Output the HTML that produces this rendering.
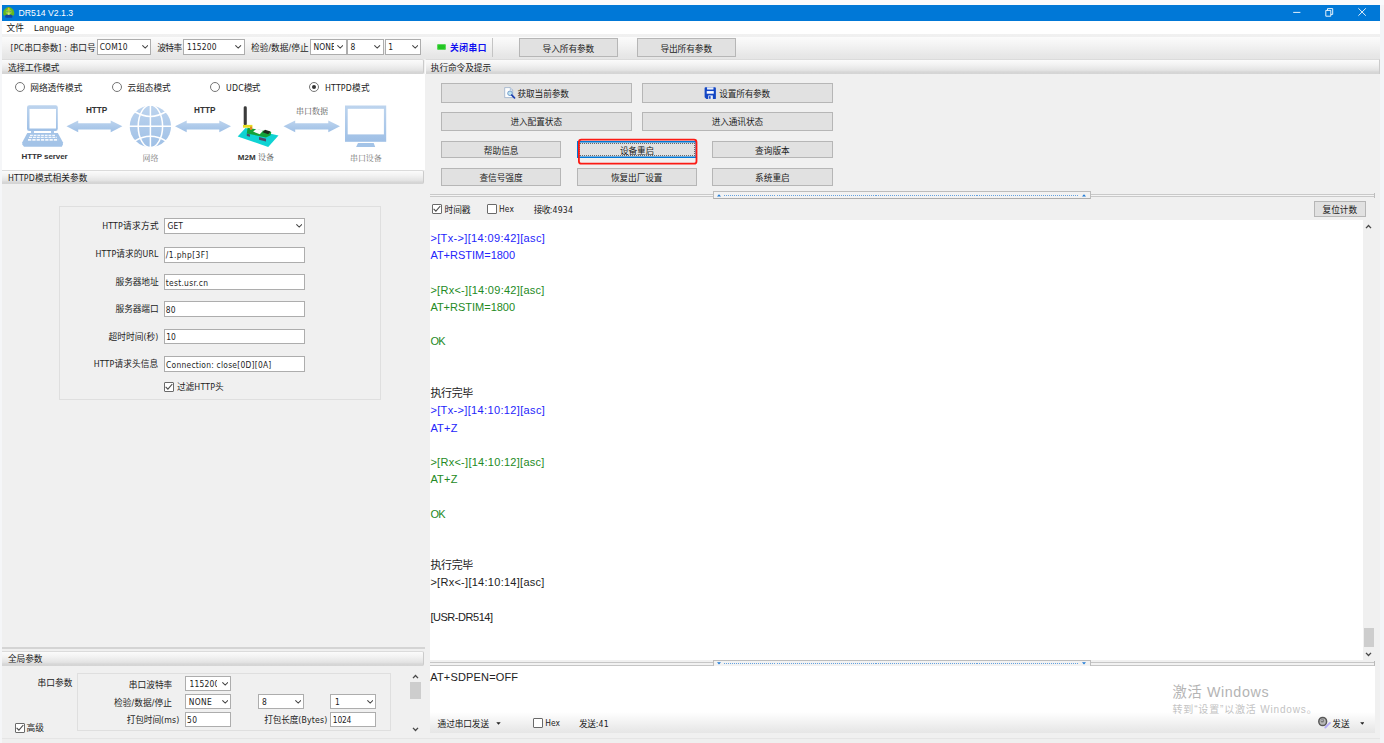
<!DOCTYPE html>
<html lang="zh-CN">
<head>
<meta charset="utf-8">
<title>DR514 V2.1.3</title>
<style>
*{box-sizing:border-box;margin:0;padding:0}
html,body{width:1384px;height:743px;overflow:hidden}
body{position:relative;background:#f9fafc;font-family:"DejaVu Sans Condensed","Liberation Sans","Noto Sans CJK SC",sans-serif;font-size:8.7px;color:#1c1c1c;line-height:1}
.a{position:absolute}
.t{position:absolute;white-space:nowrap;line-height:14px;height:14px}
.hd{background:linear-gradient(#fbfbfb 0%,#f2f2f2 35%,#e3e3e3 74%,#d7d7d7 85%,#d4d4d4 100%);border-top:1px solid #dbdbdb}
.cb{background:#fff;border:1px solid #adadad}
.in{background:#fff;border:1px solid #adadad}
.btn{background:#e1e1e1;border:1px solid #b6b6b6}
.gb{border:1px solid #dfdfdf}
.chk{width:10px;height:10px;border:1px solid #6a6a6a;background:#fff;border-radius:1px}
.rad{width:10px;height:10px;border:1px solid #757575;border-radius:50%;background:#fff}
.l{font-size:1em;letter-spacing:0.2px}

</style>
</head>
<body>
<div class="a " style="left:0px;top:0px;width:2px;height:743px;background:#f5f6f8"></div>
<div class="a " style="left:1380.3px;top:5px;width:3.7px;height:738px;background:#f3f4f7"></div>
<div class="a " style="left:2px;top:5px;width:1378.3px;height:733.3px;background:#f0f0f0"></div>
<div class="a " style="left:2px;top:738px;width:1378.3px;height:5px;background:#efefef;border-top:1px solid #e5e5e5"></div>
<div class="a " style="left:2px;top:5px;width:1378.3px;height:16px;background:#0078d7"></div>
<div class="a " style="left:2px;top:21px;width:1378.3px;height:12.7px;background:#fff"></div>
<div class="a " style="left:2px;top:33.7px;width:1378.3px;height:25.6px;background:linear-gradient(#f1f1f1 0,#f0f0f0 10%,#fbfbfb 13%,#f3f3f3 45%,#e7e7e7 85%,#e5e5e5 100%)"></div>
<svg class="a" style="left:2px;top:5px" width="16" height="16" viewBox="2 5 16 16">
 <path d="M5.200 13.500h7.200v3.600q0 0.700-0.700 0.700h-5.800q-0.700 0-0.700-0.700z" fill="#1446a6"/>
 <path d="M8.700 7C5.500 7.400 3.200 10.300 3.200 13.300C3.200 15.600 4.600 16.300 5.700 14.900C7 14.300 10.400 14.300 11.800 14.900C12.900 16.300 14.300 15.600 14.300 13.300C14.300 10.300 12 7.400 8.700 7z" fill="#63b81f"/>
 <ellipse cx="8.700" cy="11.800" rx="3" ry="2.600" fill="#8ed23a"/>
 <ellipse cx="8.700" cy="9" rx="1" ry="1.300" fill="#f0a83a"/>
 <ellipse cx="8.700" cy="13.700" rx="1.100" ry="1.300" fill="#d6e07a"/>
 <rect x="6.200" y="10.900" width="1.700" height="0.900" rx="0.400" fill="#6a7d86"/><rect x="9.600" y="10.900" width="1.700" height="0.900" rx="0.400" fill="#6a7d86"/>
</svg>
<svg class="a" style="left:1290px;top:5px" width="90" height="16" viewBox="0 0 90 16">
 <path d="M3.200 7.400h7.200" stroke="#fff" stroke-width="0.9" fill="none"/>
 <path d="M35.800 5.400h5v5.800h-5z M37.500 5.400v-1.800h5.200v5.800h-1.900" stroke="#fff" stroke-width="0.9" fill="none"/>
 <path d="M68.400 3.300l7.400 7.400M75.800 3.300l-7.400 7.400" stroke="#fff" stroke-width="0.9" fill="none"/>
</svg>
<div class="a cb" style="left:96.5px;top:39.4px;width:54.9px;height:15.2px;"><svg class="a" style="right:2.2px;top:5.1px" width="6.400" height="3.700" viewBox="0 0 7 4"><path d="M0.400 0.300L3.500 3.400L6.600 0.300" stroke="#444" fill="none" stroke-width="1.100"/></svg></div>
<div class="a cb" style="left:183.3px;top:39.4px;width:61.6px;height:15.2px;"><svg class="a" style="right:2.2px;top:5.1px" width="6.400" height="3.700" viewBox="0 0 7 4"><path d="M0.400 0.300L3.500 3.400L6.600 0.300" stroke="#444" fill="none" stroke-width="1.100"/></svg></div>
<div class="a cb" style="left:310px;top:39.4px;width:36.5px;height:15.2px;"><svg class="a" style="right:2.2px;top:5.1px" width="6.400" height="3.700" viewBox="0 0 7 4"><path d="M0.400 0.300L3.500 3.400L6.600 0.300" stroke="#444" fill="none" stroke-width="1.100"/></svg></div>
<div class="a cb" style="left:347.2px;top:39.4px;width:36.8px;height:15.2px;"><svg class="a" style="right:2.2px;top:5.1px" width="6.400" height="3.700" viewBox="0 0 7 4"><path d="M0.400 0.300L3.500 3.400L6.600 0.300" stroke="#444" fill="none" stroke-width="1.100"/></svg></div>
<div class="a cb" style="left:384.8px;top:39.4px;width:36.7px;height:15.2px;"><svg class="a" style="right:2.2px;top:5.1px" width="6.400" height="3.700" viewBox="0 0 7 4"><path d="M0.400 0.300L3.500 3.400L6.600 0.300" stroke="#444" fill="none" stroke-width="1.100"/></svg></div>
<div class="a " style="left:437px;top:43.8px;width:9.3px;height:6.6px;background:#22c622;border-radius:2px;box-shadow:inset 0 0 0 1px #5fd85f"></div>
<div class="a " style="left:492px;top:38px;width:1px;height:18.5px;background:#c4c4c4"></div>
<div class="a btn" style="left:519px;top:38.1px;width:99.2px;height:18.9px;"></div>
<div class="a btn" style="left:637.2px;top:38.1px;width:98.4px;height:18.9px;"></div>
<div class="a hd" style="left:2px;top:59px;width:422.3px;height:14.5px;border-right:1px solid #cbcbcb;border-radius:0 2px 2px 0"></div>
<div class="a " style="left:2px;top:73.5px;width:422.5px;height:96px;background:#fff"></div>
<div class="a hd" style="left:2px;top:170px;width:422.3px;height:14.4px;border-right:1px solid #cbcbcb;border-radius:0 2px 2px 0"></div>
<div class="a hd" style="left:425px;top:59px;width:954.8px;height:14.8px;border-left:1px solid #fafafa;border-right:1px solid #cbcbcb"></div>
<div class="a rad" style="left:14.8px;top:82.1px"></div>
<div class="a rad" style="left:111.6px;top:82.1px"></div>
<div class="a rad" style="left:209.8px;top:82.1px"></div>
<div class="a rad" style="left:308.8px;top:82.1px"><div class="a" style="left:2px;top:2px;width:4.4px;height:4.4px;border-radius:50%;background:#333"></div></div>
<svg class="a" style="left:0;top:95px" width="425" height="75" viewBox="0 95 425 75">
<defs>
<linearGradient id="g1" x1="0" y1="0" x2="0" y2="1"><stop offset="0" stop-color="#bdd4ee"/><stop offset="1" stop-color="#9fc0e6"/></linearGradient>
</defs>
<!-- laptop -->
<rect x="27" y="105.300" width="30.800" height="25.700" rx="2.200" fill="url(#g1)"/>
<rect x="29.500" y="108.900" width="26.500" height="19.600" fill="#fff"/>
<path d="M31 131h3v2h-3z M51 131h3v2h-3z" fill="#a9c7ea"/>
<path d="M27.300 132.900H57.800L62.900 142.300V144.500L61.800 146.700H24L22.300 144.500V142.300z" fill="#a3c3e7"/>
<path d="M30 135.300h25.500" stroke="#f4f8fd" stroke-width="1.300" stroke-dasharray="2.800 0.900"/>
<path d="M29 137.400h28" stroke="#f4f8fd" stroke-width="1.400" stroke-dasharray="3 0.900"/>
<path d="M28 139.900h30.200" stroke="#f4f8fd" stroke-width="1.800" stroke-dasharray="3.300 1"/>
<!-- arrows -->
<g fill="url(#g1)">
<path d="M66.5 126.35l11.7 -5.8v2.75h32.5v-2.75l11.7 5.8l-11.7 5.8v-2.75h-32.5v2.75z"/>
<path d="M175 126.35l11.7 -5.8v2.75h32.6v-2.75l11.7 5.8l-11.7 5.8v-2.75h-32.6v2.75z"/>
<path d="M283.5 126.35l11.7 -5.8v2.75h33.1v-2.75l11.7 5.8l-11.7 5.8v-2.75h-33.1v2.75z"/>
</g>
<!-- globe -->
<circle cx="150.400" cy="126.300" r="20.700" fill="url(#g1)"/>
<g stroke="#fff" stroke-width="1.500" fill="none">
<path d="M150.400 105v43M129 126.300h43"/>
<ellipse cx="150.400" cy="126.300" rx="12.200" ry="21.200"/>
<path d="M134.500 111.500Q150.400 121.300 166.300 111.500M134.500 141.100Q150.400 131.300 166.300 141.100"/>
</g>
<!-- m2m device -->
<path d="M237.700 136.400l7.800-8.400l33 7.500l-10.300 11.500z" fill="#0fd3d3"/>
<path d="M246.800 133.400l0.700-5.700l23.800 4.200l-0.700 3.300l-4.600 2.300z" fill="#12a238"/>
<path d="M253.100 131.500l3.500-2.800l6.700 1.800l-3.500 3.800z" fill="#fafafa"/>
<path d="M262.600 132.200l2.400-2.400l5.600 1.700l-2.400 2.800z" fill="#1d2a1d"/>
<path d="M246.800 133.600l3.200 0.800v2.400l-3.200-0.800z M259 137.100l7 1.700v2.600l-7-1.700z" fill="#4e4a68"/>
<rect x="243.700" y="106.300" width="3.100" height="19" rx="1.400" fill="#3b3b3b"/>
<rect x="243" y="124.900" width="9.400" height="2.800" fill="#e6de22"/>
<rect x="250" y="126.600" width="2.200" height="3.200" fill="#e08a1e"/>
<!-- monitor -->
<rect x="345" y="105.500" width="41.200" height="36.300" fill="url(#g1)"/>
<rect x="347.700" y="108.800" width="36.200" height="25.600" fill="#fff"/>
<path d="M358 143.100h15.700l1.500 3.900h-19.100z" fill="#a3c3e7"/>
</svg>
<div class="a gb" style="left:59.4px;top:205.7px;width:322px;height:194.8px;"></div>
<div class="a cb" style="left:163.8px;top:218px;width:141.4px;height:15.7px;"><svg class="a" style="right:2.2px;top:5.35px" width="6.400" height="3.700" viewBox="0 0 7 4"><path d="M0.400 0.300L3.500 3.400L6.600 0.300" stroke="#444" fill="none" stroke-width="1.100"/></svg></div>
<div class="a in" style="left:163.8px;top:247px;width:141.4px;height:15.8px;"></div>
<div class="a in" style="left:163.8px;top:274.3px;width:141.4px;height:15.5px;"></div>
<div class="a in" style="left:163.8px;top:301px;width:141.4px;height:15.6px;"></div>
<div class="a in" style="left:163.8px;top:328.6px;width:141.4px;height:15.9px;"></div>
<div class="a in" style="left:163.8px;top:356px;width:141.4px;height:15.6px;"></div>
<div class="a chk" style="left:163.8px;top:381.8px"><svg class="a" style="left:0;top:0" width="8" height="8" viewBox="0 0 8 8"><path d="M0.600 3.800l2.300 2.400l4.400-5.200" stroke="#4a4a4a" stroke-width="1.100" fill="none"/></svg></div>
<div class="a " style="left:2px;top:646.5px;width:422.5px;height:2px;border-top:1px solid #d4d4d4;border-bottom:1px solid #d4d4d4;background:#f7f7f7"></div>
<div class="a hd" style="left:2px;top:651px;width:422.3px;height:14.6px;border-right:1px solid #cbcbcb;border-radius:0 2px 2px 0"></div>
<div class="a gb" style="left:77.3px;top:673px;width:313.3px;height:58px;"></div>
<div class="a chk" style="left:14.6px;top:722.6px"><svg class="a" style="left:0;top:0" width="8" height="8" viewBox="0 0 8 8"><path d="M0.600 3.800l2.300 2.400l4.400-5.200" stroke="#4a4a4a" stroke-width="1.100" fill="none"/></svg></div>
<div class="a cb" style="left:185.3px;top:675.9px;width:45.6px;height:15.5px;"><svg class="a" style="right:1.8px;top:5.25px" width="6.400" height="3.700" viewBox="0 0 7 4"><path d="M0.400 0.300L3.500 3.400L6.600 0.300" stroke="#444" fill="none" stroke-width="1.100"/></svg></div>
<div class="a cb" style="left:185.3px;top:693.8px;width:45.6px;height:15.4px;"><svg class="a" style="right:1.8px;top:5.2px" width="6.400" height="3.700" viewBox="0 0 7 4"><path d="M0.400 0.300L3.500 3.400L6.600 0.300" stroke="#444" fill="none" stroke-width="1.100"/></svg></div>
<div class="a cb" style="left:258.3px;top:693.8px;width:45.6px;height:15.4px;"><svg class="a" style="right:1.8px;top:5.2px" width="6.400" height="3.700" viewBox="0 0 7 4"><path d="M0.400 0.300L3.500 3.400L6.600 0.300" stroke="#444" fill="none" stroke-width="1.100"/></svg></div>
<div class="a cb" style="left:330.3px;top:693.8px;width:45.5px;height:15.4px;"><svg class="a" style="right:1.8px;top:5.2px" width="6.400" height="3.700" viewBox="0 0 7 4"><path d="M0.400 0.300L3.500 3.400L6.600 0.300" stroke="#444" fill="none" stroke-width="1.100"/></svg></div>
<div class="a in" style="left:185.3px;top:712.2px;width:45.6px;height:14.4px;"></div>
<div class="a in" style="left:330.3px;top:712.2px;width:45.5px;height:14.4px;"></div>
<div class="a " style="left:409.4px;top:671.5px;width:11.9px;height:62.5px;background:#f0f0f0"></div>
<div class="a " style="left:410.1px;top:682.3px;width:10.9px;height:16.9px;background:#cdcdcd"></div>
<svg class="a" style="left:412px;top:674.3px" width="7" height="5" viewBox="0 0 7 5"><path d="M1 4.100L3.500 1.500L6 4.100" stroke="#484848" stroke-width="1.350" fill="none"/></svg>
<svg class="a" style="left:412px;top:726.7px" width="7" height="5" viewBox="0 0 7 5"><path d="M1 0.900L3.500 3.500L6 0.900" stroke="#484848" stroke-width="1.350" fill="none"/></svg>
<div class="a btn" style="left:441px;top:83px;width:190.9px;height:19.5px;"></div>
<div class="a btn" style="left:642.2px;top:83px;width:190.6px;height:19.5px;"></div>
<div class="a btn" style="left:441px;top:111.9px;width:190.9px;height:18.8px;"></div>
<div class="a btn" style="left:642.2px;top:111.9px;width:190.6px;height:18.8px;"></div>
<div class="a btn" style="left:441px;top:141.3px;width:120.4px;height:17.1px;"></div>
<div class="a btn" style="left:576.7px;top:141.3px;width:120.4px;height:17.1px;border:none;box-shadow:inset 0 0 0 1.5px #0078d7"></div>
<div class="a " style="left:579px;top:143.4px;width:116px;height:12.9px;border:1px dotted #6a6a6a"></div>
<div class="a btn" style="left:712.2px;top:141.3px;width:120.6px;height:17.1px;"></div>
<div class="a btn" style="left:441px;top:168.4px;width:120.4px;height:17.4px;"></div>
<div class="a btn" style="left:576.7px;top:168.4px;width:120.4px;height:17.4px;"></div>
<div class="a btn" style="left:712.2px;top:168.4px;width:120.6px;height:17.4px;"></div>
<svg class="a" style="left:576px;top:137px" width="124" height="30" viewBox="576 137 124 30"><rect x="578.9" y="139.700" width="117.600" height="24" rx="2.500" fill="none" stroke="#fb1a14" stroke-width="1.800"/></svg>
<svg class="a" style="left:504px;top:87.400px" width="12" height="12" viewBox="0 0 12 12">
<path d="M0.700 0.600h5.600l2.400 2.400v7.600h-8z" fill="#fdfdfd" stroke="#8fa6c4" stroke-width="0.700"/>
<path d="M6.300 0.600v2.400h2.400" fill="#dfe8f4" stroke="#8fa6c4" stroke-width="0.600"/>
<circle cx="6" cy="6.300" r="2.300" fill="#bfe4f2" stroke="#6d96c8" stroke-width="0.900"/>
<path d="M7.800 8.200l2.700 2.700" stroke="#1d3fb0" stroke-width="1.700" stroke-linecap="round"/>
</svg>
<svg class="a" style="left:704.200px;top:86.900px" width="12.200" height="12.200" viewBox="0 0 12 12">
<path d="M1.500 0.300h9.300q0.900 0 0.900 0.900v9.900q0 0.900-0.900 0.900h-8.300l-1.900-1.900v-8.900q0-0.900 0.900-0.900z" fill="#1346c4"/>
<rect x="3" y="0.300" width="6.300" height="2.200" fill="#e9effa"/>
<rect x="2.700" y="4" width="6.900" height="2.600" fill="#f8faff"/>
<rect x="4.200" y="8.300" width="4.500" height="3.700" fill="#e9effa"/>
<rect x="5" y="9" width="1.500" height="2.600" fill="#1346c4"/>
</svg>
<div class="a " style="left:430px;top:193.8px;width:944.5px;height:3px;border-top:1px solid #c9c9c9;border-bottom:1px solid #c9c9c9;background:#f4f4f4"></div>
<div class="a " style="left:1373.5px;top:192.5px;width:1px;height:5px;background:#bdbdbd"></div>
<div class="a " style="left:713.4px;top:191.3px;width:377.2px;height:7.4px;background:#f2f2f2;border:1px solid #bdbdbd;border-bottom-color:#adadad"></div>
<div class="a " style="left:723.8px;top:194.7px;width:356.2px;height:1.2px;background:repeating-linear-gradient(90deg,#64a2e0 0,#64a2e0 1px,transparent 1px,transparent 2.020px)"></div>
<svg class="a" style="left:717.2px;top:193.9px" width="4" height="2.800" viewBox="0 0 4 2.800"><path d="M0 2.600L2 0.200L4 2.600z" fill="#1e7ad6"/></svg>
<svg class="a" style="left:1082.3px;top:193.9px" width="4" height="2.800" viewBox="0 0 4 2.800"><path d="M0 2.600L2 0.200L4 2.600z" fill="#1e7ad6"/></svg>
<div class="a chk" style="left:432px;top:204.4px"><svg class="a" style="left:0;top:0" width="8" height="8" viewBox="0 0 8 8"><path d="M0.600 3.800l2.300 2.400l4.400-5.200" stroke="#4a4a4a" stroke-width="1.100" fill="none"/></svg></div>
<div class="a chk" style="left:487px;top:204.4px"></div>
<div class="a btn" style="left:1313.8px;top:201.2px;width:52.4px;height:16.1px;"></div>
<div class="a " style="left:429.5px;top:219.5px;width:950.8px;height:440.5px;background:#f0f0f0"></div>
<div class="a " style="left:429.5px;top:219.5px;width:933.7px;height:440.5px;background:#fff"></div>
<svg class="a" style="left:1365.3px;top:224px" width="7" height="5" viewBox="0 0 7 5"><path d="M1 4.100L3.500 1.500L6 4.100" stroke="#484848" stroke-width="1.350" fill="none"/></svg>
<svg class="a" style="left:1365.3px;top:651.5px" width="7" height="5" viewBox="0 0 7 5"><path d="M1 0.900L3.500 3.500L6 0.900" stroke="#484848" stroke-width="1.350" fill="none"/></svg>
<div class="a " style="left:1364.2px;top:628px;width:10px;height:19px;background:#cdcdcd"></div>
<div class="a " style="left:429.5px;top:661.6px;width:945.3px;height:4.2px;border-top:1px solid #c6c6c6;border-bottom:1px solid #c6c6c6;background:#f2f2f2"></div>
<div class="a " style="left:1373.8px;top:660.5px;width:1px;height:5.5px;background:#b8b8b8"></div>
<div class="a " style="left:713.4px;top:659.8px;width:377.2px;height:7.4px;background:#f2f2f2;border:1px solid #bdbdbd;border-bottom-color:#adadad"></div>
<div class="a " style="left:723.8px;top:663.2px;width:356.2px;height:1.2px;background:repeating-linear-gradient(90deg,#64a2e0 0,#64a2e0 1px,transparent 1px,transparent 2.020px)"></div>
<svg class="a" style="left:717.2px;top:662.4px" width="4" height="2.800" viewBox="0 0 4 2.800"><path d="M0 0.200L2 2.600L4 0.200z" fill="#1e7ad6"/></svg>
<svg class="a" style="left:1082.3px;top:662.4px" width="4" height="2.800" viewBox="0 0 4 2.800"><path d="M0 0.200L2 2.600L4 0.200z" fill="#1e7ad6"/></svg>
<div class="a " style="left:429.5px;top:666.3px;width:945.3px;height:46.7px;background:#fff"></div>
<div class="a " style="left:429.5px;top:712px;width:945.3px;height:20.8px;background:linear-gradient(#ffffff,#f6f6f6 35%,#eaeaea 80%,#e6e6e6)"></div>
<svg class="a" style="left:495.500px;top:722.300px" width="5" height="3" viewBox="0 0 5 3"><path d="M0.300 0.200h4.400L2.500 2.700z" fill="#222"/></svg>
<div class="a chk" style="left:533.3px;top:718.3px"></div>
<svg class="a" style="left:1359.500px;top:722.100px" width="4.600" height="2.900" viewBox="0 0 5 3"><path d="M0.200 0.200h4.600L2.500 2.800z" fill="#222"/></svg>
<svg class="a" style="left:1316px;top:714px" width="16" height="16" viewBox="1316 714 16 16">
<path d="M1325.300 727.500L1329.900 722.900" stroke="#b6aef6" stroke-width="1.900" stroke-linecap="round"/>
<ellipse cx="1322.700" cy="721.500" rx="3.900" ry="4.100" fill="#b9b9b9" stroke="#585858" stroke-width="1.500"/>
<ellipse cx="1322.300" cy="720.700" rx="1.700" ry="1.900" fill="#7a7a7a"/>
<circle cx="1322" cy="720.200" r="0.700" fill="#d8d8e8"/>
</svg>
<div class="t" style="top:6.1px;font-size:8.7px;letter-spacing:0.01px;left:18.5px;color:#fff;font-family:'Liberation Sans',sans-serif;">DR514 V2.1.3</div>
<div class="t" style="top:21.2px;font-size:8.7px;letter-spacing:-0.037px;left:6.5px;">文件</div>
<div class="t" style="top:21.2px;font-size:8.8px;letter-spacing:0.195px;left:34px;font-family:'Liberation Sans',sans-serif;">Language</div>
<div class="t" style="top:41.3px;font-size:8.7px;letter-spacing:-0.156px;left:10.4px;"><span class="l">[PC</span>串口参数<span class="l">] : </span>串口号</div>
<div class="t" style="top:40.4px;font-size:8.4px;letter-spacing:0.124px;left:99.7px;">COM10</div>
<div class="t" style="top:41.3px;font-size:8.7px;letter-spacing:-0.554px;left:157.2px;">波特率</div>
<div class="t" style="top:40.4px;font-size:8.4px;letter-spacing:0.139px;left:187px;">115200</div>
<div class="t" style="top:41.3px;font-size:8.7px;letter-spacing:0.037px;left:251px;">检验/数据/停止</div>
<div class="t" style="top:40.4px;font-size:8.4px;letter-spacing:0.158px;left:313.4px;width:20.5px;overflow:hidden;">NONE</div>
<div class="t" style="top:40.4px;font-size:8.4px;left:350.6px;">8</div>
<div class="t" style="top:40.4px;font-size:8.4px;left:388.3px;">1</div>
<div class="t" style="top:41.2px;font-size:8.7px;letter-spacing:0.562px;left:450px;color:#1010f0;font-weight:bold;">关闭串口</div>
<div class="t" style="top:41.6px;font-size:8.7px;letter-spacing:-0.087px;left:542.6px;">导入所有参数</div>
<div class="t" style="top:41.6px;font-size:8.7px;letter-spacing:-0.087px;left:660.4px;">导出所有参数</div>
<div class="t" style="top:60.6px;font-size:8.7px;letter-spacing:-0.154px;left:8px;">选择工作模式</div>
<div class="t" style="top:171.2px;font-size:8.7px;letter-spacing:0.06px;left:8px;"><span class="l">HTTPD</span>模式相关参数</div>
<div class="t" style="top:60.5px;font-size:8.7px;letter-spacing:-0.088px;left:430.8px;">执行命令及提示</div>
<div class="t" style="top:80.5px;font-size:8.7px;left:30.2px;">网络透传模式</div>
<div class="t" style="top:80.5px;font-size:8.7px;letter-spacing:-0.068px;left:127.6px;">云组态模式</div>
<div class="t" style="top:80.5px;font-size:8.7px;letter-spacing:-0.844px;left:226px;"><span class="l">UDC</span>模式</div>
<div class="t" style="top:80.5px;font-size:8.7px;letter-spacing:0.305px;left:325px;"><span class="l">HTTPD</span>模式</div>
<div class="t" style="top:104.4px;font-size:8.2px;left:85.9px;color:#333;font-weight:bold;font-family:'Liberation Sans',sans-serif;">HTTP</div>
<div class="t" style="top:104.4px;font-size:8.2px;left:194px;color:#333;font-weight:bold;font-family:'Liberation Sans',sans-serif;">HTTP</div>
<div class="t" style="top:103.8px;font-size:8px;letter-spacing:0.025px;left:296px;color:#5c5c5c;font-family:'Noto Serif CJK SC',serif;">串口数据</div>
<div class="t" style="top:150.2px;font-size:8px;letter-spacing:-0.082px;left:21.5px;color:#333;font-weight:bold;font-family:'Liberation Sans',sans-serif;">HTTP server</div>
<div class="t" style="top:151.4px;font-size:8px;letter-spacing:-0.05px;left:142.6px;color:#7a7a7a;font-family:'Noto Serif CJK SC',serif;">网络</div>
<div class="t" style="top:150.2px;font-size:8px;letter-spacing:0.05px;left:237.7px;color:#333;font-weight:bold;font-family:'Liberation Sans',sans-serif;">M2M <span style='font-family:Noto Serif CJK SC,serif;font-weight:normal;color:#555'>设备</span></div>
<div class="t" style="top:151.4px;font-size:8px;letter-spacing:-0.075px;left:350px;color:#777;font-family:'Noto Serif CJK SC',serif;">串口设备</div>
<div class="t" style="top:218.7px;font-size:8.7px;letter-spacing:0.288px;right:1225.11px;"><span class="l">HTTP</span>请求方式</div>
<div class="t" style="top:219.4px;font-size:8.4px;letter-spacing:0.099px;left:167.5px;">GET</div>
<div class="t" style="top:247px;font-size:8.7px;letter-spacing:0.044px;right:1225.36px;"><span class="l">HTTP</span>请求的<span class="l">URL</span></div>
<div class="t" style="top:248.1px;font-size:8.4px;letter-spacing:0.382px;left:165.8px;">/1.php[3F]</div>
<div class="t" style="top:274.8px;font-size:8.7px;letter-spacing:-0.108px;right:1225.51px;">服务器地址</div>
<div class="t" style="top:275.7px;font-size:8.4px;letter-spacing:0.291px;left:165.8px;">test.usr.cn</div>
<div class="t" style="top:302.2px;font-size:8.7px;letter-spacing:-0.108px;right:1225.51px;">服务器端口</div>
<div class="t" style="top:302.7px;font-size:8.4px;letter-spacing:0.253px;left:165.8px;">80</div>
<div class="t" style="top:329.5px;font-size:8.7px;letter-spacing:0.079px;right:1225.52px;">超时时间(秒)</div>
<div class="t" style="top:330px;font-size:8.4px;letter-spacing:-0.097px;left:166.2px;">10</div>
<div class="t" style="top:357.2px;font-size:8.7px;letter-spacing:0.093px;right:1225.61px;"><span class="l">HTTP</span>请求头信息</div>
<div class="t" style="top:357.5px;font-size:8.4px;letter-spacing:0.245px;left:166.1px;">Connection: close[0D][0A]</div>
<div class="t" style="top:380.2px;font-size:8.7px;letter-spacing:0.014px;left:176.9px;">过滤<span class="l">HTTP</span>头</div>
<div class="t" style="top:652.4px;font-size:8.7px;letter-spacing:-0.113px;left:8px;">全局参数</div>
<div class="t" style="top:675.7px;font-size:8.7px;letter-spacing:0.062px;left:37.5px;">串口参数</div>
<div class="t" style="top:721px;font-size:8.7px;letter-spacing:0.113px;left:26.4px;">高级</div>
<div class="t" style="top:677.9px;font-size:8.7px;letter-spacing:0.013px;right:1211.69px;">串口波特率</div>
<div class="t" style="top:677.4px;font-size:8.4px;letter-spacing:0.206px;left:189.5px;width:27.3px;overflow:hidden;">115200</div>
<div class="t" style="top:695.5px;font-size:8.7px;letter-spacing:0.087px;right:1212.01px;">检验/数据/停止</div>
<div class="t" style="top:695.3px;font-size:8.4px;letter-spacing:0.333px;left:188.8px;">NONE</div>
<div class="t" style="top:695.3px;font-size:8.4px;left:262px;">8</div>
<div class="t" style="top:695.3px;font-size:8.4px;left:335px;">1</div>
<div class="t" style="top:713.2px;font-size:8.7px;letter-spacing:-0.136px;right:1204.44px;">打包时间<span class="l">(ms)</span></div>
<div class="t" style="top:713.3px;font-size:8.4px;letter-spacing:0.403px;left:187px;">50</div>
<div class="t" style="top:713.2px;font-size:8.7px;letter-spacing:-0.197px;right:1056.4px;">打包长度<span class="l">(Bytes)</span></div>
<div class="t" style="top:713.3px;font-size:8.4px;letter-spacing:-0.193px;left:332.8px;">1024</div>
<div class="t" style="top:86.7px;font-size:8.7px;letter-spacing:-0.138px;left:517.5px;">获取当前参数</div>
<div class="t" style="top:86.7px;font-size:8.7px;letter-spacing:-0.204px;left:719.2px;">设置所有参数</div>
<div class="t" style="top:115.3px;font-size:8.7px;letter-spacing:-0.071px;left:510.4px;">进入配置状态</div>
<div class="t" style="top:115.3px;font-size:8.7px;letter-spacing:-0.138px;left:711.7px;">进入通讯状态</div>
<div class="t" style="top:143.8px;font-size:8.7px;letter-spacing:-0.013px;left:483.8px;">帮助信息</div>
<div class="t" style="top:143.8px;font-size:8.7px;letter-spacing:-0.188px;left:619.9px;">设备重启</div>
<div class="t" style="top:143.8px;font-size:8.7px;letter-spacing:-0.037px;left:755.1px;">查询版本</div>
<div class="t" style="top:171px;font-size:8.7px;letter-spacing:-0.047px;left:479.4px;">查信号强度</div>
<div class="t" style="top:171px;font-size:8.7px;letter-spacing:-0.138px;left:611px;">恢复出厂设置</div>
<div class="t" style="top:171px;font-size:8.7px;letter-spacing:-0.037px;left:755.1px;">系统重启</div>
<div class="t" style="top:202.7px;font-size:8.7px;letter-spacing:-0.021px;left:444.5px;">时间戳</div>
<div class="t" style="top:202.4px;font-size:8.4px;letter-spacing:0.125px;left:499px;">Hex</div>
<div class="t" style="top:202.7px;font-size:8.7px;letter-spacing:-0.703px;left:533.7px;">接收<span class="l">:4934</span></div>
<div class="t" style="top:202.7px;font-size:8.7px;letter-spacing:-0.012px;left:1322.5px;">复位计数</div>
<div class="t" style="top:231.1px;font-size:11px;letter-spacing:0.354px;left:430.4px;color:#2525fb;font-family:'Liberation Sans','Noto Sans CJK SC',sans-serif;">&gt;[Tx-&gt;][14:09:42][asc]</div>
<div class="t" style="top:248.32px;font-size:11px;letter-spacing:-0.006px;left:430.4px;color:#2525fb;font-family:'Liberation Sans','Noto Sans CJK SC',sans-serif;">AT+RSTIM=1800</div>
<div class="t" style="top:282.75px;font-size:11px;letter-spacing:0.276px;left:430.4px;color:#248a24;font-family:'Liberation Sans','Noto Sans CJK SC',sans-serif;">&gt;[Rx&lt;-][14:09:42][asc]</div>
<div class="t" style="top:299.97px;font-size:11px;letter-spacing:-0.006px;left:430.4px;color:#248a24;font-family:'Liberation Sans','Noto Sans CJK SC',sans-serif;">AT+RSTIM=1800</div>
<div class="t" style="top:334.41px;font-size:11px;letter-spacing:-0.653px;left:430.4px;color:#248a24;font-family:'Liberation Sans','Noto Sans CJK SC',sans-serif;">OK</div>
<div class="t" style="top:386.06px;font-size:11px;letter-spacing:-0.35px;left:430.4px;color:#222;font-family:'Liberation Sans','Noto Sans CJK SC',sans-serif;">执行完毕</div>
<div class="t" style="top:403.28px;font-size:11px;letter-spacing:0.354px;left:430.4px;color:#2525fb;font-family:'Liberation Sans','Noto Sans CJK SC',sans-serif;">&gt;[Tx-&gt;][14:10:12][asc]</div>
<div class="t" style="top:420.5px;font-size:11px;letter-spacing:0.202px;left:430.4px;color:#2525fb;font-family:'Liberation Sans','Noto Sans CJK SC',sans-serif;">AT+Z</div>
<div class="t" style="top:454.93px;font-size:11px;letter-spacing:0.276px;left:430.4px;color:#248a24;font-family:'Liberation Sans','Noto Sans CJK SC',sans-serif;">&gt;[Rx&lt;-][14:10:12][asc]</div>
<div class="t" style="top:472.15px;font-size:11px;letter-spacing:0.202px;left:430.4px;color:#248a24;font-family:'Liberation Sans','Noto Sans CJK SC',sans-serif;">AT+Z</div>
<div class="t" style="top:506.59px;font-size:11px;letter-spacing:-0.653px;left:430.4px;color:#248a24;font-family:'Liberation Sans','Noto Sans CJK SC',sans-serif;">OK</div>
<div class="t" style="top:558.24px;font-size:11px;letter-spacing:-0.35px;left:430.4px;color:#222;font-family:'Liberation Sans','Noto Sans CJK SC',sans-serif;">执行完毕</div>
<div class="t" style="top:575.46px;font-size:11px;letter-spacing:0.276px;left:430.4px;color:#222;font-family:'Liberation Sans','Noto Sans CJK SC',sans-serif;">&gt;[Rx&lt;-][14:10:14][asc]</div>
<div class="t" style="top:609.9px;font-size:11px;letter-spacing:-0.459px;left:430.4px;color:#222;font-family:'Liberation Sans','Noto Sans CJK SC',sans-serif;">[USR-DR514]</div>
<div class="t" style="top:669.5px;font-size:11px;letter-spacing:0.16px;left:430.3px;color:#222;font-family:'Liberation Sans','Noto Sans CJK SC',sans-serif;">AT+SDPEN=OFF</div>
<div class="t" style="top:716.7px;font-size:8.7px;letter-spacing:-0.121px;left:437.6px;">通过串口发送</div>
<div class="t" style="top:716.2px;font-size:8.4px;letter-spacing:0.125px;left:545.2px;">Hex</div>
<div class="t" style="top:716.7px;font-size:8.7px;letter-spacing:-0.381px;left:579px;">发送<span class="l">:41</span></div>
<div class="t" style="top:716.7px;font-size:8.7px;letter-spacing:-0.087px;left:1332.3px;">发送</div>
<div class="t" style="top:685.4px;font-size:14.3px;letter-spacing:0.612px;left:1172.5px;color:#b4b4b4;font-family:'Liberation Sans','Noto Sans CJK SC',sans-serif;">激活 Windows</div>
<div class="t" style="top:703px;font-size:10px;letter-spacing:0.832px;left:1172.5px;color:#c3c3c3;font-family:'Liberation Sans','Noto Sans CJK SC',sans-serif;">转到“设置”以激活 Windows。</div>
</body>
</html>
